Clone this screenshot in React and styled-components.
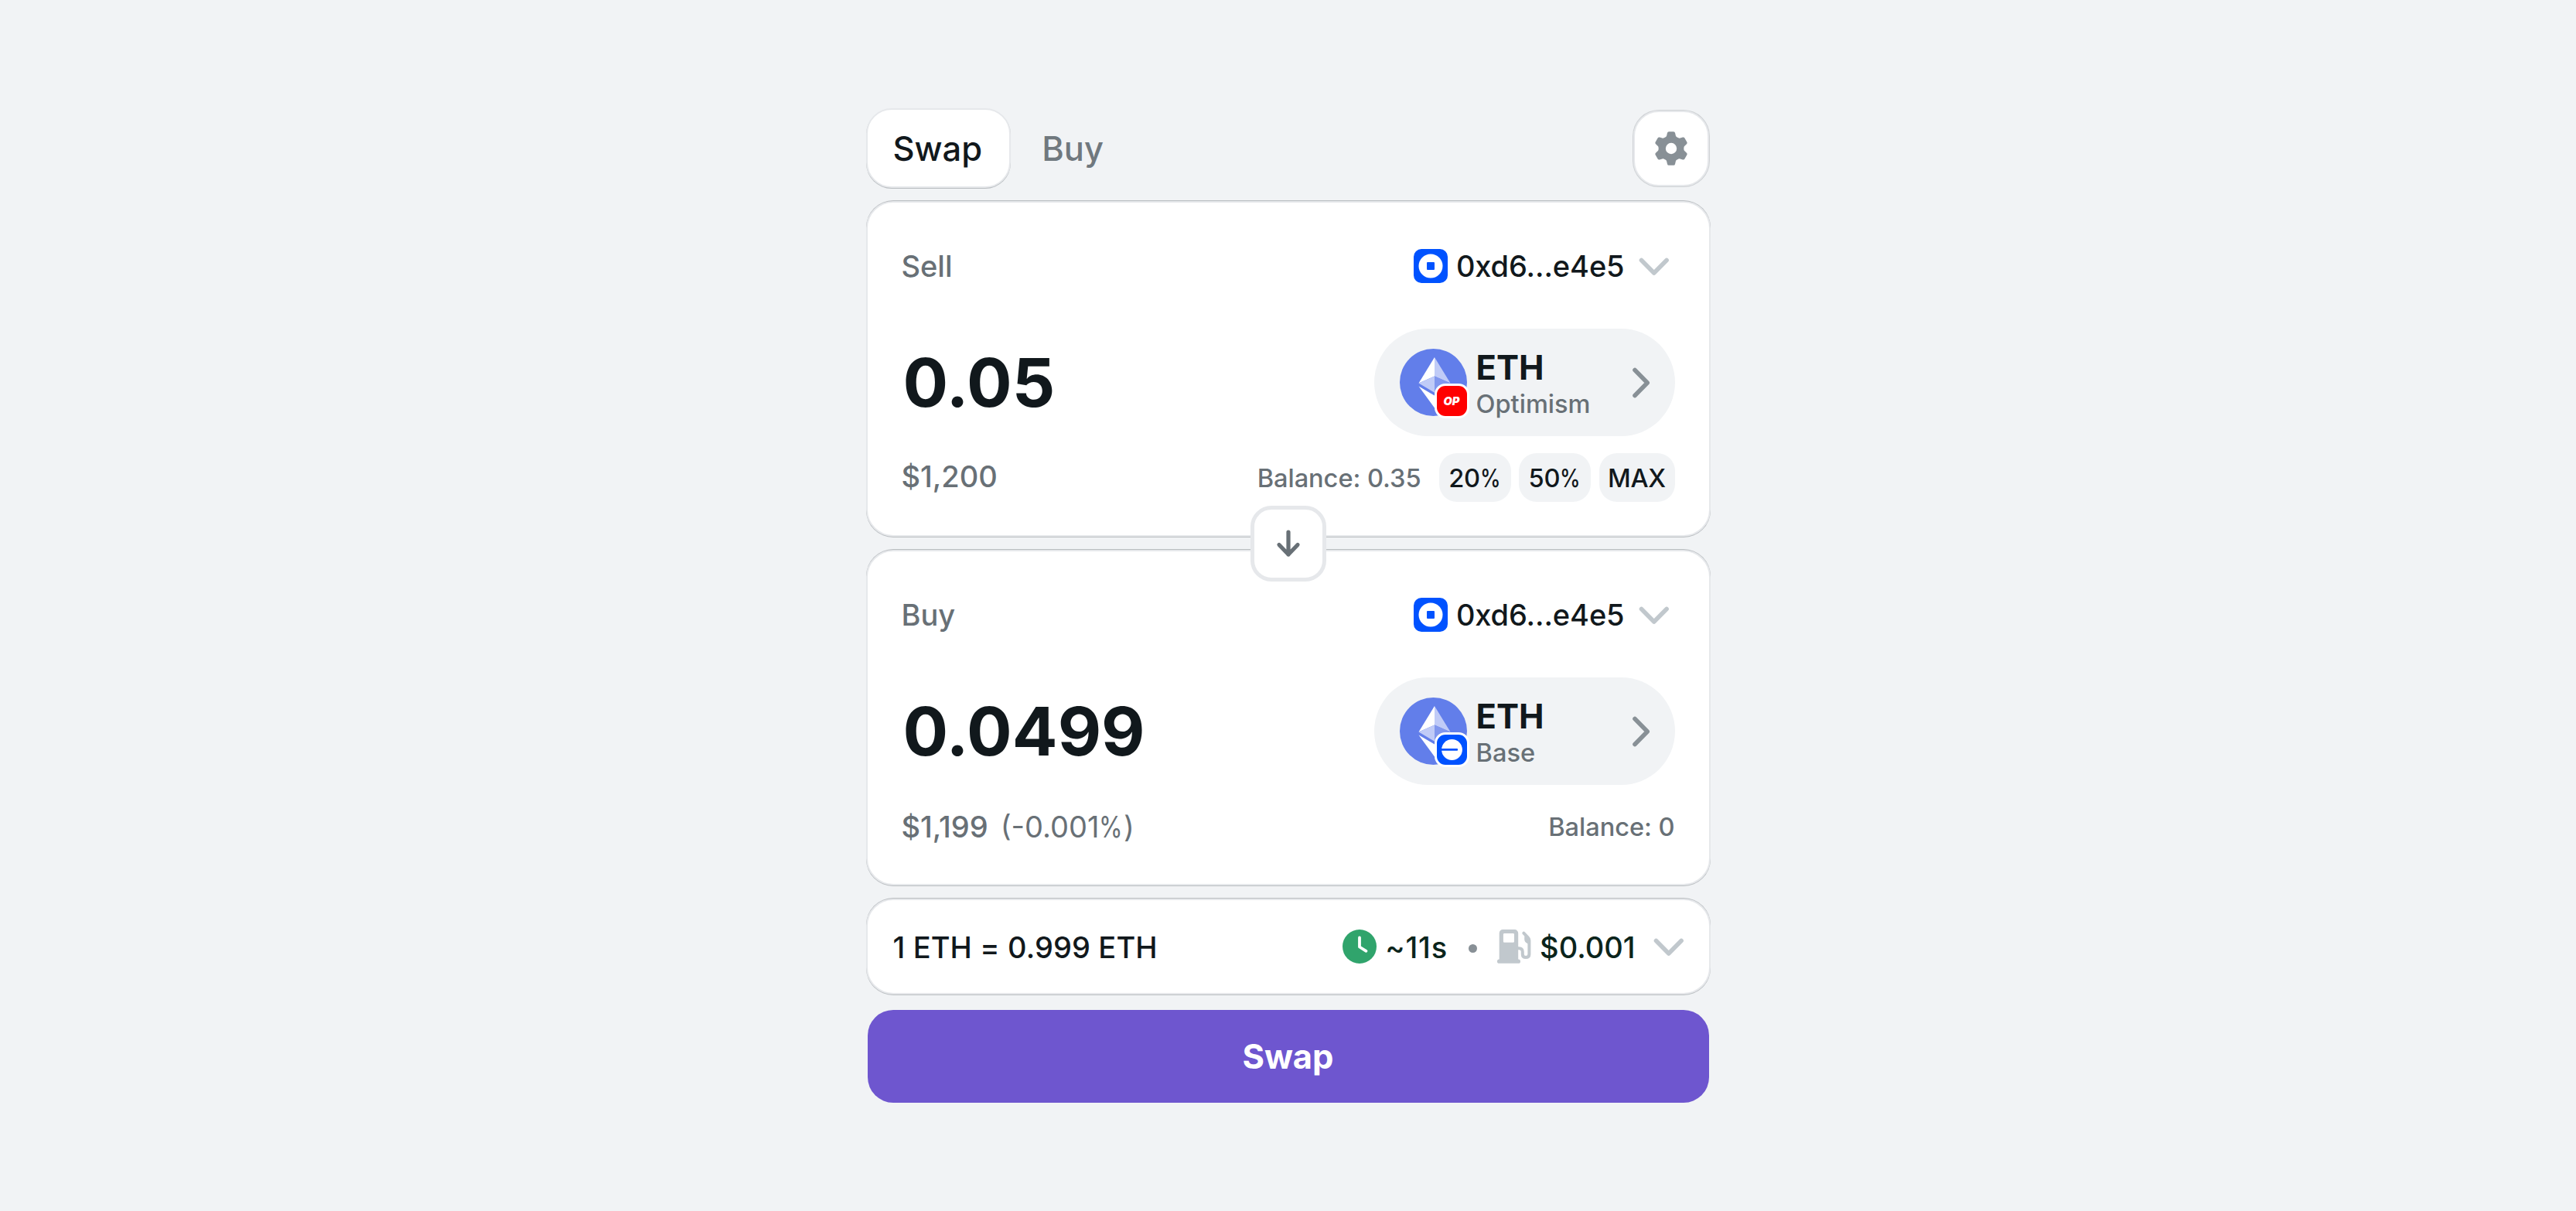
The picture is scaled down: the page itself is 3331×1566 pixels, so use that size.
import React from "react";
import styled, { createGlobalStyle } from "styled-components";

const color = {
  page: "#f1f3f5",
  surface: "#ffffff",
  border: "#e6e8eb",
  hairline: "#b9bdc0",
  ink: "#11181c",
  muted: "#687076",
  faint: "#c1c8cd",
  icon: "#889096",
  primary: "#6e56cf",
};

const GlobalStyle = createGlobalStyle`
  *, *::before, *::after { box-sizing: border-box; }
  body {
    margin: 0;
    background: ${color.page};
    font-family: Inter, "Liberation Sans", sans-serif;
    color: ${color.ink};
  }
  button { font: inherit; border: 0; padding: 0; background: none; color: inherit; }
  svg { display: block; flex: none; }
`;

const Page = styled.main`
  height: 1566px;
  display: flex;
  flex-direction: column;
  align-items: center;
  padding-top: 140px;
`;

const Widget = styled.section`
  width: 1092px;
  display: flex;
  flex-direction: column;
`;

const Header = styled.header`
  height: 103px;
  display: flex;
  justify-content: space-between;
  align-items: center;
  padding-right: 2px;
  margin-bottom: 17px;
`;

const Tabs = styled.nav`
  display: flex;
  height: 100%;
`;

const Tab = styled.button`
  height: 100%;
  padding: 0 ${(p) => (p.$active ? 35 : 38)}px 0 33px;
  margin-left: ${(p) => (p.$active ? 0 : 5)}px;
  border: 2px solid ${(p) => (p.$active ? color.border : "transparent")};
  border-radius: 33px;
  background: ${(p) => (p.$active ? color.surface : "transparent")};
  box-shadow: ${(p) => (p.$active ? `0 1px 0 ${color.hairline}` : "none")};
  color: ${(p) => (p.$active ? color.ink : "#70787e")};
  font-size: 43.5px;
  font-weight: 500;
`;

const SettingsButton = styled.button`
  width: 98px;
  height: 98px;
  display: flex;
  align-items: center;
  justify-content: center;
  border: 2px solid ${color.border};
  border-radius: 33px;
  background: ${color.surface};
  box-shadow: 0 0 0 1px #cfd2d5;
`;

const Card = styled.section`
  height: 434px;
  padding: 38px 44px 0 44px;
  margin-bottom: 17px;
  border: 2px solid ${color.border};
  border-radius: 35px;
  background: ${color.surface};
  box-shadow: 0 1px 0 ${color.hairline}, 0 -1px 0 ${color.hairline};
`;

const Row = styled.div`
  display: flex;
  align-items: center;
  justify-content: space-between;
  height: ${(p) => p.$height}px;
  margin-top: ${(p) => p.$top || 0}px;
`;

const Cluster = styled.div`
  display: flex;
  align-items: center;
  gap: ${(p) => p.$gap || 0}px;
  padding-right: ${(p) => p.$inset || 0}px;
`;

const Label = styled.span`
  font-size: 38px;
  font-weight: 500;
  line-height: 46px;
  padding-bottom: ${(p) => p.$lift || 0}px;
  color: ${color.muted};
`;

const Delta = styled.span`
  font-size: 38px;
  font-weight: 400;
  line-height: 46px;
  padding-top: 1px;
  color: ${color.muted};
  margin-left: 16px;
`;

const Percent = styled.span`
  display: inline-block;
  transform: scaleX(0.82);
  transform-origin: left center;
  margin-right: -0.15em;
`;

const Address = styled.span`
  font-size: 38px;
  font-weight: 500;
  line-height: 46px;
  letter-spacing: -0.1px;
  margin-left: 11px;
  margin-right: 16px;
`;

const Amount = styled.div`
  font-size: 87px;
  font-weight: 700;
  line-height: 104px;
  padding-left: 2px;
`;

const TokenPill = styled.button`
  width: 389px;
  height: 139px;
  padding: 0 30px 0 33px;
  border-radius: 70px;
  background: ${color.page};
  display: flex;
  align-items: center;
  justify-content: space-between;
`;

const TokenMark = styled.span`
  position: relative;
  width: 87px;
  height: 87px;
`;

const ChainBadge = styled.span`
  position: absolute;
  right: -3px;
  bottom: -3px;
  width: 45px;
  height: 45px;
  border: 3px solid #ffffff;
  border-radius: 14px;
  background: ${(p) => p.$fill};
  display: flex;
  align-items: center;
  justify-content: center;
  color: #ffffff;
  font-size: 14.5px;
  font-weight: 900;
  font-style: italic;
`;

const TokenText = styled.span`
  display: flex;
  flex-direction: column;
  align-items: flex-start;
  padding-top: 4px;
`;

const Symbol = styled.span`
  font-size: 43.5px;
  font-weight: 700;
  line-height: 50px;
`;

const Chain = styled.span`
  font-size: 32.6px;
  font-weight: 500;
  line-height: 44px;
  color: ${color.muted};
`;

const Balance = styled.span`
  font-size: 32.6px;
  font-weight: 500;
  line-height: 40px;
  letter-spacing: -0.05px;
  color: ${color.muted};
`;

const Chip = styled.button`
  width: ${(p) => p.$width || 93}px;
  height: 63px;
  border-radius: 23px;
  background: ${color.page};
  font-size: 32.6px;
  font-weight: 500;
  letter-spacing: -0.3px;
`;

const Chips = styled.div`
  display: flex;
  gap: 10.5px;
  margin-left: 23px;
`;

const FlipAnchor = styled.div`
  position: relative;
  height: 0;
`;

const FlipButton = styled.button`
  position: absolute;
  left: 497px;
  top: -57px;
  width: 98px;
  height: 98px;
  display: flex;
  align-items: center;
  justify-content: center;
  border: 5px solid #e6e8eb;
  border-radius: 27px;
  background: ${color.surface};
`;

const RateBar = styled.section`
  height: 124px;
  padding: 0 30px 0 33px;
  margin-bottom: 20px;
  display: flex;
  align-items: center;
  justify-content: space-between;
  border: 2px solid ${color.border};
  border-radius: 35px;
  background: ${color.surface};
  box-shadow: 0 1px 0 ${color.hairline}, 0 -1px 0 ${color.hairline};
`;

const RateText = styled.span`
  font-size: 38px;
  font-weight: 500;
  line-height: 46px;
  padding-top: 1px;
  letter-spacing: ${(p) => p.$spacing || 0}px;
  color: ${(p) => (p.$green ? "#0b241b" : color.ink)};
`;

const Dot = styled.span`
  width: 11px;
  height: 11px;
  margin: 5px 26px 0 27px;
  border-radius: 50%;
  background: ${color.icon};
`;

const SubmitButton = styled.button`
  width: 1088px;
  height: 120px;
  align-self: center;
  border-radius: 33px;
  background: ${color.primary};
  color: #ffffff;
  font-size: 43.5px;
  font-weight: 700;
`;

function GearIcon() {
  return (
    <svg width="44" height="44" viewBox="-22 -22 44 44" fill={color.icon}>
      <circle r="16.4" />
      {[0, 60, 120, 180, 240, 300].map((a) => (
        <path
          key={a}
          transform={`rotate(${a})`}
          d="M-8.2 -13 L-6 -16 L-5 -20.2 Q-4.7 -21.8 -3 -21.8 H3 Q4.7 -21.8 5 -20.2 L6 -16 L8.2 -13 Z"
        />
      ))}
      <circle r="7.2" fill="#ffffff" />
    </svg>
  );
}

function WalletIcon() {
  return (
    <svg width="44" height="44" viewBox="0 0 44 44">
      <rect width="44" height="44" rx="10" fill="#0052ff" />
      <circle cx="22" cy="22" r="15.5" fill="#ffffff" />
      <rect x="17" y="17" width="10" height="10" rx="1" fill="#0052ff" />
    </svg>
  );
}

function ChevronDown() {
  return (
    <svg width="44" height="44" viewBox="0 0 44 44" fill="none">
      <path
        d="M5.5 14.5 L21.8 31 L38.1 14.5"
        stroke={color.faint}
        strokeWidth="5.6"
        strokeLinecap="round"
        strokeLinejoin="round"
      />
    </svg>
  );
}

function ChevronRight() {
  return (
    <svg width="28" height="44" viewBox="0 0 28 44" fill="none">
      <path
        d="M6 5.5 L22.2 22 L6 38.5"
        stroke={color.icon}
        strokeWidth="5.6"
        strokeLinecap="round"
        strokeLinejoin="round"
      />
    </svg>
  );
}

function EthIcon() {
  return (
    <svg width="87" height="87" viewBox="0 0 87 87">
      <circle cx="43.5" cy="43.5" r="43.5" fill="#627eea" />
      <path d="M45 11 L24.5 44.5 L45 35.5 Z" fill="#ffffff" />
      <path d="M45 11 L65.5 44.5 L45 35.5 Z" fill="#c0cbf7" />
      <path d="M45 35.5 L24.5 44.5 L45 56.8 Z" fill="#c0cbf7" />
      <path d="M45 35.5 L65.5 44.5 L45 56.8 Z" fill="#8197ee" />
      <path d="M24.5 48.4 L45 60.6 V76.5 Z" fill="#ffffff" />
      <path d="M65.5 48.4 L45 60.6 V76.5 Z" fill="#c0cbf7" />
    </svg>
  );
}

function BaseGlyph() {
  return (
    <svg width="39" height="39" viewBox="0 0 39 39">
      <circle cx="19.5" cy="19.5" r="13.4" fill="#ffffff" />
      <rect x="5" y="18" width="22" height="2.8" rx="0.8" fill="#0052ff" />
    </svg>
  );
}

function ArrowDown() {
  return (
    <svg width="36" height="40" viewBox="0 0 36 40" fill="none">
      <path
        d="M18 5 V34 M6 21.5 L18 34 L30 21.5"
        stroke={color.muted}
        strokeWidth="5.2"
        strokeLinecap="round"
        strokeLinejoin="round"
      />
    </svg>
  );
}

function ClockIcon() {
  return (
    <svg width="44" height="44" viewBox="0 0 44 44" fill="none">
      <circle cx="22" cy="22" r="22" fill="#30a46c" />
      <path
        d="M22 10.5 V22.5 L30.5 27.8"
        stroke="#ffffff"
        strokeWidth="3.8"
        strokeLinecap="round"
        strokeLinejoin="round"
      />
    </svg>
  );
}

function FuelIcon() {
  return (
    <svg width="44" height="44" viewBox="0 0 44 44" fill={color.faint}>
      <path
        fillRule="evenodd"
        d="M7.5 0 H22.5 A4.7 4.7 0 0 1 27.2 4.7 V39 H2.7 V4.7 A4.7 4.7 0 0 1 7.5 0 Z M9.3 5 A1.4 1.4 0 0 0 7.9 6.4 V15.4 A1.4 1.4 0 0 0 9.3 16.8 H20.6 A1.4 1.4 0 0 0 22 15.4 V6.4 A1.4 1.4 0 0 0 20.6 5 Z"
      />
      <rect x="0" y="38.6" width="30" height="5.2" rx="2.6" />
      <path
        d="M26.5 24.2 H28 Q32.8 24.2 32.8 29 V32 Q32.8 36 37 36 Q41.4 36 41.4 32 V14 Q41.4 12 40 10.6 L34.3 4.6"
        fill="none"
        stroke={color.faint}
        strokeWidth="4"
        strokeLinecap="round"
      />
      <path d="M34.6 5 L42.8 12.5 V19.5 L39 18 Q35.2 16 35.2 12.5 V10.5 Q36.2 8.6 34.6 5 Z" />
    </svg>
  );
}

function TokenSelect({ chain, badgeFill, glyph }) {
  return (
    <TokenPill>
      <Cluster $gap={12}>
        <TokenMark>
          <EthIcon />
          <ChainBadge $fill={badgeFill}>{glyph}</ChainBadge>
        </TokenMark>
        <TokenText>
          <Symbol>ETH</Symbol>
          <Chain>{chain}</Chain>
        </TokenText>
      </Cluster>
      <ChevronRight />
    </TokenPill>
  );
}

function Wallet() {
  return (
    <Cluster $inset={5}>
      <WalletIcon />
      <Address>0xd6...e4e5</Address>
      <ChevronDown />
    </Cluster>
  );
}

function AmountCard({ title, amount, token, children }) {
  return (
    <Card>
      <Row $height={88}>
        <Label>{title}</Label>
        <Wallet />
      </Row>
      <Row $height={139} $top={37}>
        <Amount>{amount}</Amount>
        {token}
      </Row>
      <Row $height={63} $top={22}>
        {children}
      </Row>
    </Card>
  );
}

export default function App() {
  return (
    <Page>
      <GlobalStyle />
      <Widget>
        <Header>
          <Tabs>
            <Tab $active>Swap</Tab>
            <Tab>Buy</Tab>
          </Tabs>
          <SettingsButton aria-label="Settings">
            <GearIcon />
          </SettingsButton>
        </Header>

        <AmountCard
          title="Sell"
          amount="0.05"
          token={<TokenSelect chain="Optimism" badgeFill="#ff0000" glyph="OP" />}
        >
          <Label $lift={4}>$1,200</Label>
          <Cluster>
            <Balance>Balance: 0.35</Balance>
            <Chips>
              <Chip>
                20<Percent>%</Percent>
              </Chip>
              <Chip>
                50<Percent>%</Percent>
              </Chip>
              <Chip $width={98}>MAX</Chip>
            </Chips>
          </Cluster>
        </AmountCard>

        <FlipAnchor>
          <FlipButton aria-label="Switch tokens">
            <ArrowDown />
          </FlipButton>
        </FlipAnchor>

        <AmountCard
          title="Buy"
          amount="0.0499"
          token={<TokenSelect chain="Base" badgeFill="#0052ff" glyph={<BaseGlyph />} />}
        >
          <Cluster>
            <Label>$1,199</Label>
            <Delta>
              (-0.001<Percent>%</Percent>)
            </Delta>
          </Cluster>
          <Balance>Balance: 0</Balance>
        </AmountCard>

        <RateBar>
          <RateText $spacing={0.12}>1 ETH = 0.999 ETH</RateText>
          <Cluster>
            <Cluster $gap={11}>
              <ClockIcon />
              <RateText $green $spacing={0.9}>~11s</RateText>
            </Cluster>
            <Dot />
            <Cluster $gap={11} $inset={21}>
              <FuelIcon />
              <RateText $green>$0.001</RateText>
            </Cluster>
            <ChevronDown />
          </Cluster>
        </RateBar>

        <SubmitButton>Swap</SubmitButton>
      </Widget>
    </Page>
  );
}
